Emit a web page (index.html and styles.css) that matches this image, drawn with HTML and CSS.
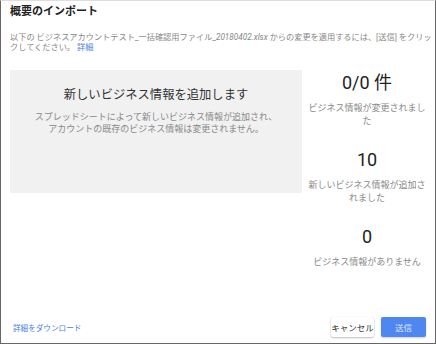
FILE: index.html
```html
<!DOCTYPE html>
<html lang="ja">
<head>
<meta charset="utf-8">
<link rel="stylesheet" href="styles.css">
</head>
<body>
<div class="dialog">
  <div class="title">概要のインポート</div>
  <div class="intro">以下の ビジネスアカウントテスト_一括確認用ファイル_<i class="file">20180402.xlsx</i> からの変更を適用するには、[送信] をクリックしてください。 <a class="link">詳細</a></div>
  <div class="main">
    <div class="panel">
      <div class="panel-title">新しいビジネス情報を追加します</div>
      <div class="panel-text">スプレッドシートによって新しいビジネス情報が追加され、<br>アカウントの既存のビジネス情報は変更されません。</div>
    </div>
    <div class="stats">
      <div class="stat">
        <div class="num">0/0 件</div>
        <div class="label">ビジネス情報が変更されました</div>
      </div>
      <div class="stat">
        <div class="num">10</div>
        <div class="label">新しいビジネス情報が追加されました</div>
      </div>
      <div class="stat">
        <div class="num">0</div>
        <div class="label">ビジネス情報がありません</div>
      </div>
    </div>
  </div>
  <div class="footer">
    <a class="link download">詳細をダウンロード</a>
    <div class="buttons">
      <button class="btn cancel">キャンセル</button>
      <button class="btn send">送信</button>
    </div>
  </div>
</div>
</body>
</html>
```
FILE: styles.css
```css
html, body {
  margin: 0;
  padding: 0;
  background: #fff;
}
body {
  font-family: Roboto, "Noto Sans CJK JP", sans-serif;
}
.dialog {
  width: 436px;
  height: 344px;
  box-sizing: border-box;
  border: 1px solid #666;
  border-top-color: #ddd;
  display: flex;
  flex-direction: column;
  background: #fff;
}
.title {
  font-size: 11px;
  font-weight: bold;
  color: #222;
  padding: 4px 9px 0;
  line-height: 14px;
}
.intro {
  margin-top: 13px;
  padding: 0 0 0 9px;
  font-size: 8.2px;
  line-height: 10px;
  color: #888;
}
.file {
  font-style: italic;
}
.link {
  color: #4a7fe0;
  text-decoration: none;
}
.main {
  display: flex;
  margin-top: 18px;
  padding-left: 9px;
}
.panel {
  width: 292px;
  height: 123px;
  background: #f1f1f1;
  text-align: center;
  box-sizing: border-box;
  padding-top: 17px;
}
.panel-title {
  font-size: 12.3px;
  color: #333;
  line-height: 16px;
}
.panel-text {
  margin-top: 9px;
  font-size: 9px;
  line-height: 11.5px;
  color: #888;
}
.stats {
  width: 126px;
  margin-left: 2px;
  text-align: center;
  padding-top: 2px;
}
.stat {
  height: 77px;
}
.num {
  font-size: 18px;
  line-height: 22px;
  color: #222;
}
.label {
  margin-top: 8px;
  font-size: 9px;
  line-height: 12.5px;
  color: #888;
  padding: 0 2px;
}
.footer {
  margin-top: auto;
  display: flex;
  justify-content: space-between;
  align-items: center;
  padding: 0 9px 5px 12px;
  height: 22px;
}
.download {
  font-size: 7.6px;
}
.buttons {
  display: flex;
  gap: 7px;
}
.btn {
  font-family: Roboto, "Noto Sans CJK JP", sans-serif;
  height: 20px;
  border: none;
  border-radius: 2px;
  padding: 0;
  font-size: 8.5px;
}
.cancel {
  width: 43px;
  background: #fff;
  color: #333;
  box-shadow: 0 1px 2px rgba(0,0,0,0.25), 0 0 1px rgba(0,0,0,0.15);
}
.send {
  width: 45px;
  background: #4f87f0;
  color: #dbe6fb;
  box-shadow: 0 1px 2px rgba(0,0,0,0.2);
}
```
